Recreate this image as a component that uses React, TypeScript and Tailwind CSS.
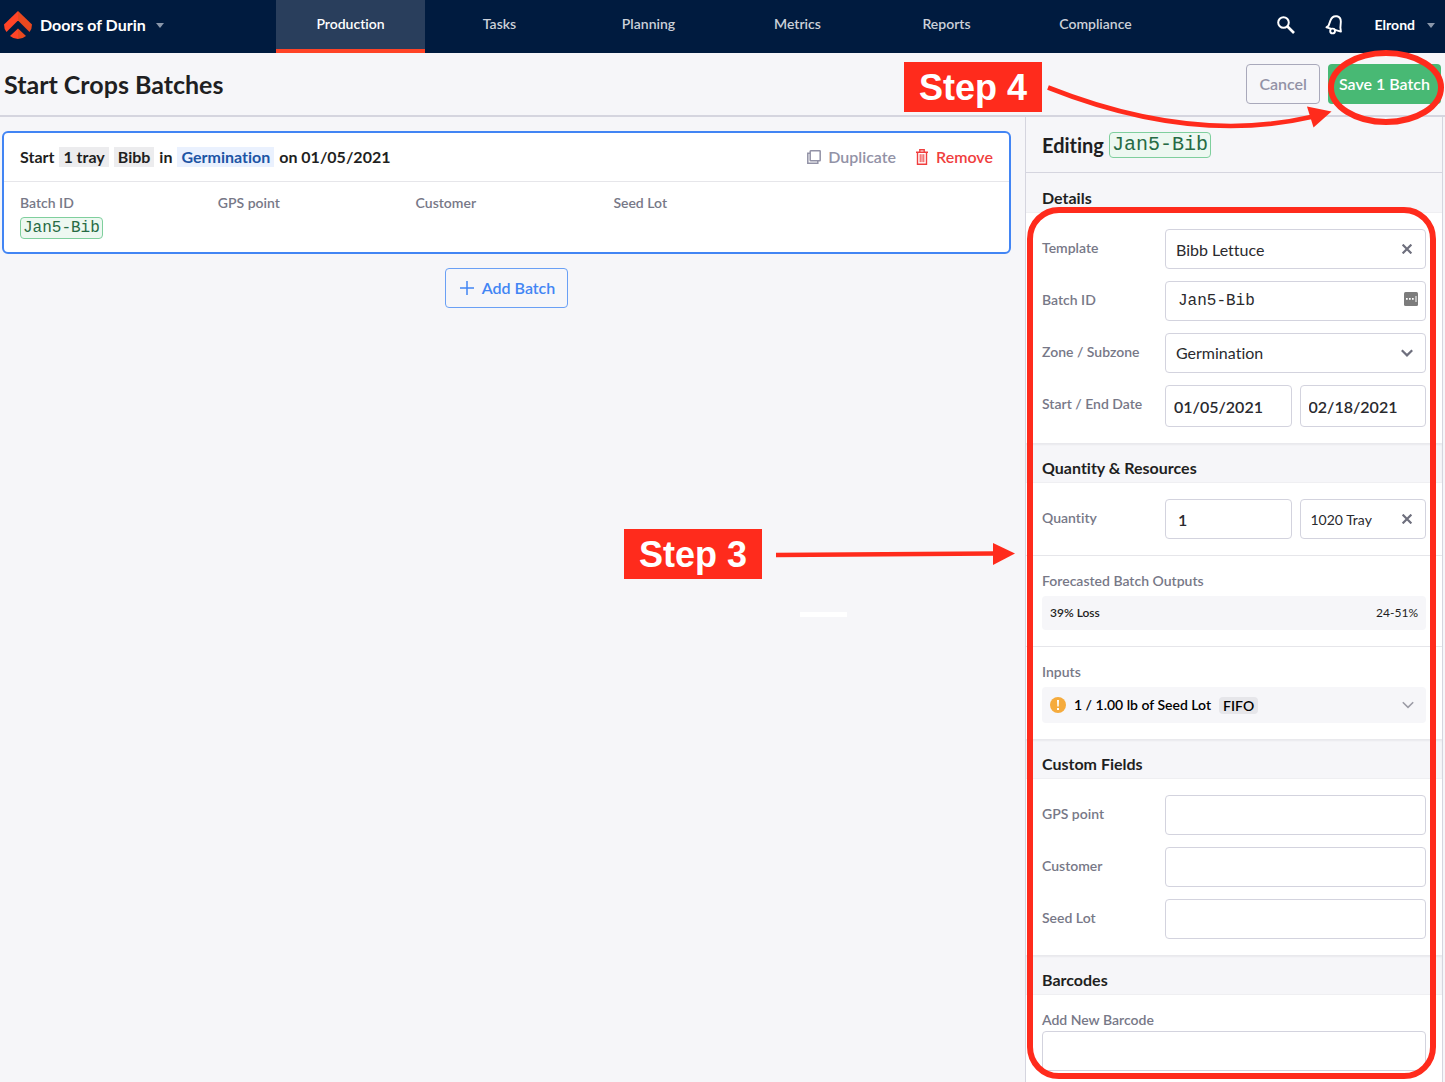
import React, { useState } from 'react';

const tabs = ['Production', 'Tasks', 'Planning', 'Metrics', 'Reports', 'Compliance'];

const box = 'border border-[#d3d3de] rounded bg-white text-[#2a2a2e] outline-none focus:border-[#4285f4]';

const Logo = () => (
  <svg viewBox="0 0 28 28" className="w-7 h-7 shrink-0" aria-hidden="true">
    <path d="M14 0 L0 13.5 Q0 18 2.5 21 L14 9.5 Z" fill="#ff4427" />
    <path d="M14 0 L28 13.5 Q28 18 25.5 21 L14 9.5 Z" fill="#e8491f" />
    <path d="M14 17.5 L6 25 Q9.5 28 14 28 Z" fill="#ff4427" />
    <path d="M14 17.5 L22 25 Q18.500 28 14 28 Z" fill="#e8491f" />
  </svg>
);

const Caret = () => (
  <svg viewBox="0 0 8 5" className="w-2 h-[5px]" fill="#8a97aa" aria-hidden="true"><path d="M0 0h8L4 5z" /></svg>
);

const SearchIcon = () => (
  <svg viewBox="0 0 18 18" className="w-[18px] h-[18px]" fill="none" stroke="#fff" strokeWidth="2" aria-hidden="true">
    <circle cx="6.500" cy="6.500" r="5.300" />
    <path d="M10.500 10.500 L17 17" strokeWidth="2.600" />
  </svg>
);

const BellIcon = () => (
  <svg viewBox="0 0 18 20" className="w-[18px] h-5" fill="none" stroke="#fff" strokeWidth="1.900" strokeLinejoin="round" strokeLinecap="round" aria-hidden="true">
    <path d="M1.500 12.300 L3.500 10.800 L5.400 5.600 C6.600 2.200 9.200 .8 12 1.300 C14.800 1.900 16 4.200 15.800 7.200 L15.400 12.600 L15.900 16.600 Z" />
    <circle cx="7.600" cy="16" r="2.400" fill="#001b3f" />
  </svg>
);

const DuplicateIcon = () => (
  <svg viewBox="0 0 14 14" className="w-3.5 h-3.5" fill="none" stroke="currentColor" strokeWidth="1.500" aria-hidden="true">
    <rect x="3.200" y=".8" width="10" height="10" rx=".5" />
    <path d="M3.200 3.200 H.8 V13.200 H10.800 V10.800" />
  </svg>
);

const TrashIcon = () => (
  <svg viewBox="0 0 12 16" className="w-3 h-4" fill="none" stroke="currentColor" strokeWidth="1.400" aria-hidden="true">
    <path d="M0 3.200 H12 M3.800 3 V.8 H8.200 V3 M1.500 3.200 V15.200 H10.500 V3.200" />
    <path d="M4.200 5.200 V13.200 M6 5.200 V13.200 M7.800 5.200 V13.200" strokeWidth="1" />
  </svg>
);

const CloseIcon = () => (
  <svg viewBox="0 0 10 10" className="w-2.5 h-2.5" stroke="#6e6f7d" strokeWidth="2.200" aria-hidden="true"><path d="M.6 .6 L9.400 9.400 M9.400 .6 L.6 9.400" /></svg>
);

const Chevron = ({ color, width }: { color: string; width: number }) => (
  <svg viewBox="0 0 12 8" className="w-3 h-2" fill="none" stroke={color} strokeWidth={width} aria-hidden="true"><path d="M.8 1.200 L6 6.400 L11.200 1.200" /></svg>
);

const BatchChip = ({ large }: { large?: boolean }) => (
  <span className={`inline-block rounded border border-[#7fcf9d] bg-[#edf8f1] text-[#276b45] font-['Liberation_Mono',monospace] font-normal px-0.5 ${large ? 'text-xl leading-6' : 'text-base leading-5'}`}>Jan5-Bib</span>
);

const SectionTitle = ({ flat, children }: { flat?: boolean; children: React.ReactNode }) => (
  <h3 className={`h-10 pt-[15px] px-4 bg-[#f6f6f9] border-b border-[#efeff2] text-base leading-5 font-bold ${flat ? '' : 'shadow-[inset_0_2px_2px_rgba(30,30,50,0.06)]'}`}>{children}</h3>
);

const Row = ({ label, id, children }: { label: string; id: string; children: React.ReactNode }) => (
  <div className="flex items-start">
    <label htmlFor={id} className="w-[123px] shrink-0 leading-[38px] text-sm font-semibold text-[#777887]">{label}</label>
    <div className="grid grid-flow-col auto-cols-fr flex-1 min-w-0 gap-2">{children}</div>
  </div>
);

const StepLabel = ({ n }: { n: number }) => (
  <div className="w-[138px] h-[50px] bg-[#ff2b1c] text-white text-center text-[36px] leading-[52px] font-bold font-['Liberation_Sans',sans-serif]">Step {n}</div>
);

const App: React.FC = () => {
  const [template, setTemplate] = useState('Bibb Lettuce');
  const [batchId, setBatchId] = useState('Jan5-Bib');
  const [unit, setUnit] = useState('1020 Tray');

  return (
    <div className="relative min-h-screen flex flex-col bg-[#f6f6f9] text-[#1f1f22] font-['Lato',sans-serif] [font-variant-ligatures:no-common-ligatures]">
      <header className="h-[53px] flex bg-[#001b3f] text-white">
        <button className="w-[276px] shrink-0 flex items-center pl-1 pb-[3px] text-base font-bold">
          <Logo />
          <span className="ml-2 mr-2.5">Doors of Durin</span>
          <Caret />
        </button>
        <nav className="flex flex-1">
          {tabs.map((t, i) => (
            <a key={t} href="#" className={`flex-1 text-center text-sm leading-[48px] font-semibold border-b-4 ${i === 0 ? 'bg-[#293e5c] border-[#ff4326]' : 'border-transparent text-[#ccd1d9]'}`}>{t}</a>
          ))}
        </nav>
        <div className="w-[275px] shrink-0 flex items-center justify-end pr-2.5 pb-[3px]">
          <button aria-label="Search" className="mr-[30px]"><SearchIcon /></button>
          <button aria-label="Notifications" className="mr-8"><BellIcon /></button>
          <button className="flex items-center gap-3 text-sm font-bold">Elrond <Caret /></button>
        </div>
      </header>

      <div className="h-16 flex items-center justify-between pl-1 pr-1 border-b-2 border-[#d5d5df]">
        <h1 className="text-[25px] leading-8 font-bold">Start Crops Batches</h1>
        <div className="flex gap-2">
          <button className="h-10 px-3 rounded border border-[#a9a9bb] text-base font-semibold text-[#9292a6]">Cancel</button>
          <button className="h-10 px-[11px] rounded bg-[#48b974] text-white text-base font-semibold">Save 1 Batch</button>
        </div>
      </div>

      <div className="flex flex-1">
        <main className="relative flex-1 min-w-0 pt-3.5 pl-0.5 pr-3.5">
          <section className="rounded-md border-2 border-[#4285f4] bg-white">
            <div className="h-[49px] px-4 flex items-center justify-between border-b border-[#e6e6ea]">
              <p className="flex items-center gap-[5px] text-base leading-5 font-bold">
                Start
                <span className="bg-[#ececee] px-1">1 tray</span>
                <span className="bg-[#ececee] px-1">Bibb</span>
                in
                <span className="bg-[#eaf1fe] px-1 text-[#1d55a5]">Germination</span>
                on 01/05/2021
              </p>
              <div className="flex gap-5 text-base font-semibold">
                <button className="flex items-center gap-[7px] text-[#9292a6]"><DuplicateIcon />Duplicate</button>
                <button className="flex items-center gap-2 text-[#f03e3e]"><TrashIcon />Remove</button>
              </div>
            </div>
            <dl className="grid grid-cols-5 h-[70px] pl-4 pt-[11px] text-sm font-semibold text-[#777887]">
              <div>
                <dt>Batch ID</dt>
                <dd className="mt-1"><BatchChip /></dd>
              </div>
              <div><dt>GPS point</dt></div>
              <div><dt>Customer</dt></div>
              <div><dt>Seed Lot</dt></div>
            </dl>
          </section>
          <div className="mt-3.5 flex justify-center">
            <button className="h-10 px-3 flex items-center gap-1.5 rounded border border-[#6aa0f5] text-base font-semibold text-[#4285f4]">
              <svg viewBox="0 0 18 18" className="w-[18px] h-[18px]" stroke="currentColor" strokeWidth="1.500" aria-hidden="true"><path d="M9 2v14M2 9h14" /></svg>
              Add Batch
            </button>
          </div>

          {/* step 3 callout */}
          <div className="pointer-events-none absolute top-[412px] right-[10px] flex gap-3.5">
            <StepLabel n={3} />
            <svg viewBox="0 0 239 50" className="w-[239px] h-[50px]" aria-hidden="true">
              <path d="M0 26 L218 24.500" stroke="#ff2b1c" strokeWidth="4.600" />
              <path d="M217 14 L239 24.500 L217 36 Z" fill="#ff2b1c" />
            </svg>
          </div>
          <div className="absolute top-[495px] right-[178px] w-[47px] h-[5px] bg-white" />
        </main>

        <aside className="relative w-[418px] shrink-0 mr-0.5 border-l border-r border-[#d5d5df] bg-white">
          <h2 className="h-14 px-4 flex items-center gap-[5px] bg-[#f6f6f9] border-b border-[#d5d5df] text-xl font-bold">
            Editing <BatchChip large />
          </h2>

          <SectionTitle flat>Details</SectionTitle>
          <div className="p-4 flex flex-col gap-3">
            <Row label="Template" id="template">
              <div className={`flex min-w-0 items-center h-10 pr-[13px] ${box}`}>
                <input id="template" value={template} onChange={e => setTemplate(e.target.value)} className="flex-1 min-w-0 h-full pl-2.5 text-base outline-none" />
                <button aria-label="Clear template" onClick={() => setTemplate('')}><CloseIcon /></button>
              </div>
            </Row>
            <Row label="Batch ID" id="batch">
              <div className={`flex min-w-0 items-center h-10 pr-[7px] ${box}`}>
                <input id="batch" value={batchId} onChange={e => setBatchId(e.target.value)} className="flex-1 min-w-0 h-full pl-3 text-base font-['Liberation_Mono',monospace] outline-none" />
                <svg viewBox="0 0 14 14" className="w-3.5 h-3.5 mb-1" aria-hidden="true">
                  <rect width="14" height="14" rx="1.500" fill="#7c7c7c" />
                  <path d="M2 6h1.700v1.700H2zM5 6h1.700v1.700H5zM8 6h1.700v1.700H8zM11.500 4h1v6h-1z" fill="#fff" />
                </svg>
              </div>
            </Row>
            <Row label="Zone / Subzone" id="zone">
              <div className="relative">
                <select id="zone" className={`block appearance-none w-full h-10 pl-2.5 pr-8 text-base ${box}`}>
                  <option>Germination</option>
                </select>
                <span className="pointer-events-none absolute right-[13px] top-0 h-10 flex items-center"><Chevron color="#6e6f7d" width={2.2} /></span>
              </div>
            </Row>
            <Row label="Start / End Date" id="start">
              <input id="start" defaultValue="01/05/2021" className={`min-w-0 h-[42px] px-2 text-base font-semibold ${box}`} />
              <input aria-label="End date" defaultValue="02/18/2021" className={`min-w-0 h-[42px] px-2 text-base font-semibold ${box}`} />
            </Row>
          </div>

          <SectionTitle>Quantity &amp; Resources</SectionTitle>
          <div className="p-4 border-b border-[#e6e6ea]">
            <Row label="Quantity" id="qty">
              <input id="qty" defaultValue="1" className={`min-w-0 h-10 px-3 text-base font-semibold ${box}`} />
              <div className={`flex min-w-0 items-center h-10 pr-[13px] ${box}`}>
                <input aria-label="Unit" value={unit} onChange={e => setUnit(e.target.value)} className="flex-1 min-w-0 h-full pl-2.5 text-sm outline-none" />
                <button aria-label="Clear unit" onClick={() => setUnit('')}><CloseIcon /></button>
              </div>
            </Row>
          </div>
          <div className="px-4 pt-[15px] pb-4 border-b border-[#e6e6ea]">
            <h4 className="mb-[5px] text-sm font-semibold text-[#777887]">Forecasted Batch Outputs</h4>
            <div className="h-[34px] px-2 flex items-center justify-between rounded bg-[#f6f6f9] text-xs">
              <span className="font-semibold">39% Loss</span>
              <span>24-51%</span>
            </div>
          </div>
          <div className="px-4 pt-[15px] pb-4">
            <h4 className="mb-[5px] text-sm font-semibold text-[#777887]">Inputs</h4>
            <button className="w-full h-9 pl-2 pr-3 flex items-center rounded bg-[#f6f6f9] text-sm font-semibold text-black">
              <svg viewBox="0 0 16 16" className="w-4 h-4 mr-2" aria-hidden="true">
                <circle cx="8" cy="8" r="8" fill="#f5ab3d" />
                <path d="M7 3h2l-.3 6.500H7.300zM7 11h2v2H7z" fill="#fff" />
              </svg>
              1 / 1.00 lb of Seed Lot
              <span className="ml-2 px-1 rounded bg-[#e6e6ea] leading-[17px]">FIFO</span>
              <span className="ml-auto"><Chevron color="#9c9ca6" width={1.6} /></span>
            </button>
          </div>

          <SectionTitle>Custom Fields</SectionTitle>
          <div className="p-4 flex flex-col gap-3">
            <Row label="GPS point" id="gps"><input id="gps" className={`min-w-0 h-10 px-2.5 ${box}`} /></Row>
            <Row label="Customer" id="customer"><input id="customer" className={`min-w-0 h-10 px-2.5 ${box}`} /></Row>
            <Row label="Seed Lot" id="seed"><input id="seed" className={`min-w-0 h-10 px-2.5 ${box}`} /></Row>
          </div>

          <SectionTitle>Barcodes</SectionTitle>
          <div className="px-4 pt-[15px] pb-[11px]">
            <label htmlFor="barcode" className="block mb-px text-sm font-semibold text-[#777887]">Add New Barcode</label>
            <input id="barcode" className={`block w-full h-10 px-2.5 ${box}`} />
          </div>

          <div className="pointer-events-none absolute top-[90px] bottom-[3px] left-px right-[6px] rounded-[32px] border-6 border-[#ff2b1c]" />
        </aside>
      </div>

      {/* step 4 callout */}
      <div className="pointer-events-none absolute top-[50px] right-0 w-[541px] h-20 pt-3">
        <StepLabel n={4} />
        <svg viewBox="904 50 541 80" className="absolute inset-0 w-full h-full" fill="none" stroke="#ff2b1c" aria-hidden="true">
          <path d="M1048 87.500 C1130 120 1220 138 1311 117" strokeWidth="4.600" />
          <path d="M1331.500 111.500 L1307 106.500 L1313.500 127.500 Z" fill="#ff2b1c" stroke="none" />
          <ellipse cx="1386" cy="87.500" rx="55" ry="34.500" strokeWidth="6" />
        </svg>
      </div>
    </div>
  );
};

export default App;
